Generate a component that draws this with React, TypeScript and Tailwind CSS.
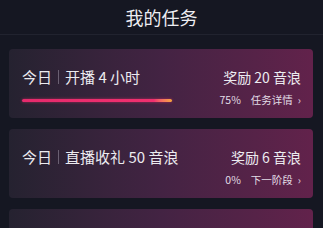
const font = { fontFamily: '"Noto Sans CJK SC", "Noto Sans", sans-serif' };

type Task = {
  name: string;
  reward: string;
  percent: string;
  action: string;
  progress?: number;
};

const tasks: Task[] = [
  { name: "开播 4 小时", reward: "奖励 20 音浪", percent: "75%", action: "任务详情", progress: 150 },
  { name: "直播收礼 50 音浪", reward: "奖励 6 音浪", percent: "0%", action: "下一阶段" },
  { name: "", reward: "", percent: "", action: "" },
];

function TaskCard({ task }: { task: Task }) {
  return (
    <div className="relative flex h-[69px] w-full shrink-0 items-start justify-between rounded-[4px] bg-gradient-to-r from-[#252230] via-[#432343] to-[#62224b] pl-[13px] pr-[12px]">
      {task.name && (
        <div className="flex flex-col pt-[17px]">
          <div className="flex items-center text-[15px] leading-[22px] text-[#ecebf0]">
            <span>今日</span>
            <span className="mx-[6px] h-[14px] w-px bg-[#6a6072]" />
            <span>{task.name}</span>
          </div>
          {task.progress !== undefined && (
            <div
              className="mt-[11px] h-[3px] rounded-full bg-gradient-to-r from-[#e52a6c] via-[#f0306f] via-88% to-[#f4a53a] shadow-[0_0_3px_rgba(240,48,111,0.6)]"
              style={{ width: task.progress }}
            />
          )}
        </div>
      )}
      {task.reward && (
        <div className="flex flex-col items-end pt-[17px]">
          <span className="text-[14px] leading-[22px] text-[#ecebf0]">{task.reward}</span>
          <div className="mt-[5px] flex items-center text-[10.5px] leading-[14px] text-[#e2dde6]">
            <span>{task.percent}</span>
            <span className="ml-[10px]">{task.action}</span>
            <span className="ml-[5px]">›</span>
          </div>
        </div>
      )}
    </div>
  );
}

export default function App() {
  return (
    <div className="h-[228px] w-[323px] overflow-hidden bg-[#151722]" style={font}>
      <div className="flex h-[35px] items-center justify-center border-b border-[#21232f] text-[18px] text-[#eeeef2]">
        我的任务
      </div>
      <div className="flex flex-col gap-[11px] pl-[9px] pr-[10px] pt-[14px]">
        {tasks.map((t, i) => (
          <TaskCard key={i} task={t} />
        ))}
      </div>
    </div>
  );
}
